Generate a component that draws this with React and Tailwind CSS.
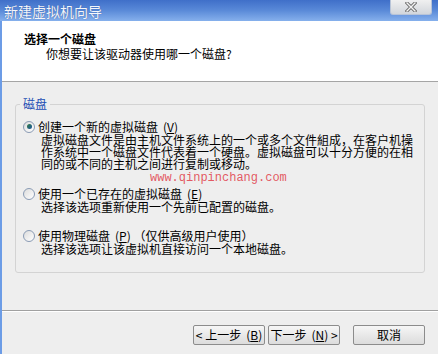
import React from 'react'

const font = { fontFamily: '"Noto Sans CJK SC", "Noto Sans", sans-serif' }

const Radio = ({ checked }) => (
  <span className="relative inline-flex h-[12px] w-[12px] shrink-0 items-center justify-center rounded-full border border-[#8a9bb4] bg-gradient-to-br from-[#dcdcdc] to-white">
    {checked && <span className="h-[5px] w-[5px] rounded-full bg-gradient-to-br from-[#3a7a3a] to-[#1f4f9c]" />}
  </span>
)

const Key = ({ k }) => (
  <span className="ml-[5px]">(<span className="underline">{k}</span>)</span>
)

const Option = ({ checked, label, children, className = '' }) => (
  <div className={className}>
    <div className="flex items-center gap-[3px] pl-[7px] text-[12px] leading-[13px]">
      <Radio checked={checked} />
      <span className="whitespace-nowrap">{label}</span>
    </div>
    <div className="mt-[1px] whitespace-nowrap pl-[25px] text-[12px] leading-[12px]">{children}</div>
  </div>
)

const Button = ({ children, className = '' }) => (
  <button className={`flex h-[20px] w-[72px] items-center justify-center rounded-[2px] border border-[#8c8c8c] bg-gradient-to-b from-[#f6f6f6] to-[#dcdcdc] text-[12px] leading-[12px] text-black ${className}`}>
    {children}
  </button>
)

export default function App() {
  return (
    <div className="relative flex h-[354px] w-[438px] flex-col overflow-hidden bg-[#eeeeee] text-black" style={font}>
      {/* Title bar */}
      <div className="relative flex h-[21px] shrink-0 items-center bg-gradient-to-b from-[#3f6fc9] via-[#5a8ad8] to-[#86b0ec] pl-[4px]">
        <span className="text-[14px] leading-[14px] text-[#f4f6fb] [text-shadow:0_0_1px_#2a4f9a]">新建虚拟机向导</span>
        <div className="absolute right-[6px] top-0 flex h-[15px] w-[42px] items-center justify-center rounded-b-[3px] border border-t-0 border-[#b8c4d8] bg-gradient-to-b from-[#f0f0f0] to-[#d2d6dc]">
          <svg width="12" height="10" viewBox="0 0 12 10">
            <path d="M2 1 L10 9 M10 1 L2 9" stroke="#6a6a6a" strokeWidth="3.2" strokeLinecap="square" />
            <path d="M2 1 L10 9 M10 1 L2 9" stroke="#f4f4f4" strokeWidth="1.4" strokeLinecap="square" />
          </svg>
        </div>
      </div>

      <div className="flex flex-1 flex-col border-l-2 border-[#6c9ce6]">
        {/* Header */}
        <div className="h-[61px] shrink-0 border-b border-[#a5a5a5] bg-white pl-[22px] pt-[10px]">
          <div className="text-[12px] font-bold leading-[15px]">选择一个磁盘</div>
          <div className="pl-[22px] text-[12px] leading-[15px]">你想要让该驱动器使用哪一个磁盘?</div>
        </div>

        {/* Content */}
        <div className="relative h-[229px] shrink-0 border-b border-[#a0a0a0] px-[13px] pt-[16px]">
          <fieldset className="h-[175px] rounded-[3px] border border-[#d3d3d3]">
            <legend className="ml-[4px] px-[3px] text-[12px] leading-[12px] text-[#1d4fb4]">磁盘</legend>
            <Option checked label={<>创建一个新的虚拟磁盘<Key k="V" /></>} className="pt-[10px]">
              虚拟磁盘文件是由主机文件系统上的一个或多个文件組成，在客户机操<br />
              作系统中一个磁盘文件代表着一个硬盘。虚拟磁盘可以十分方便的在相<br />
              同的或不同的主机之间进行复制或移动。
            </Option>
            <Option label={<>使用一个已存在的虚拟磁盘<Key k="E" /></>} className="mt-[17px]">
              选择该选项重新使用一个先前已配置的磁盘。
            </Option>
            <Option label={<>使用物理磁盘<Key k="P" /> （仅供高级用户使用）</>} className="mt-[16px]">
              选择该选项让该虚拟机直接访问一个本地磁盘。
            </Option>
          </fieldset>
          <span className="absolute left-[148px] top-[91px] text-[12px] leading-[10px] text-[#e0303c]/80" style={{ fontFamily: '"Liberation Mono", monospace' }}>
            www.qinpinchang.com
          </span>
        </div>
        <div className="h-px bg-white" />

        {/* Footer buttons */}
        <div className="flex flex-1 items-start justify-end pr-[13px] pt-[13px]">
          <Button>&lt; 上一步<Key k="B" /></Button>
          <Button className="ml-[3px]">下一步<Key k="N" />&nbsp;&gt;</Button>
          <Button className="ml-[13px]">取消</Button>
        </div>
      </div>
    </div>
  )
}
